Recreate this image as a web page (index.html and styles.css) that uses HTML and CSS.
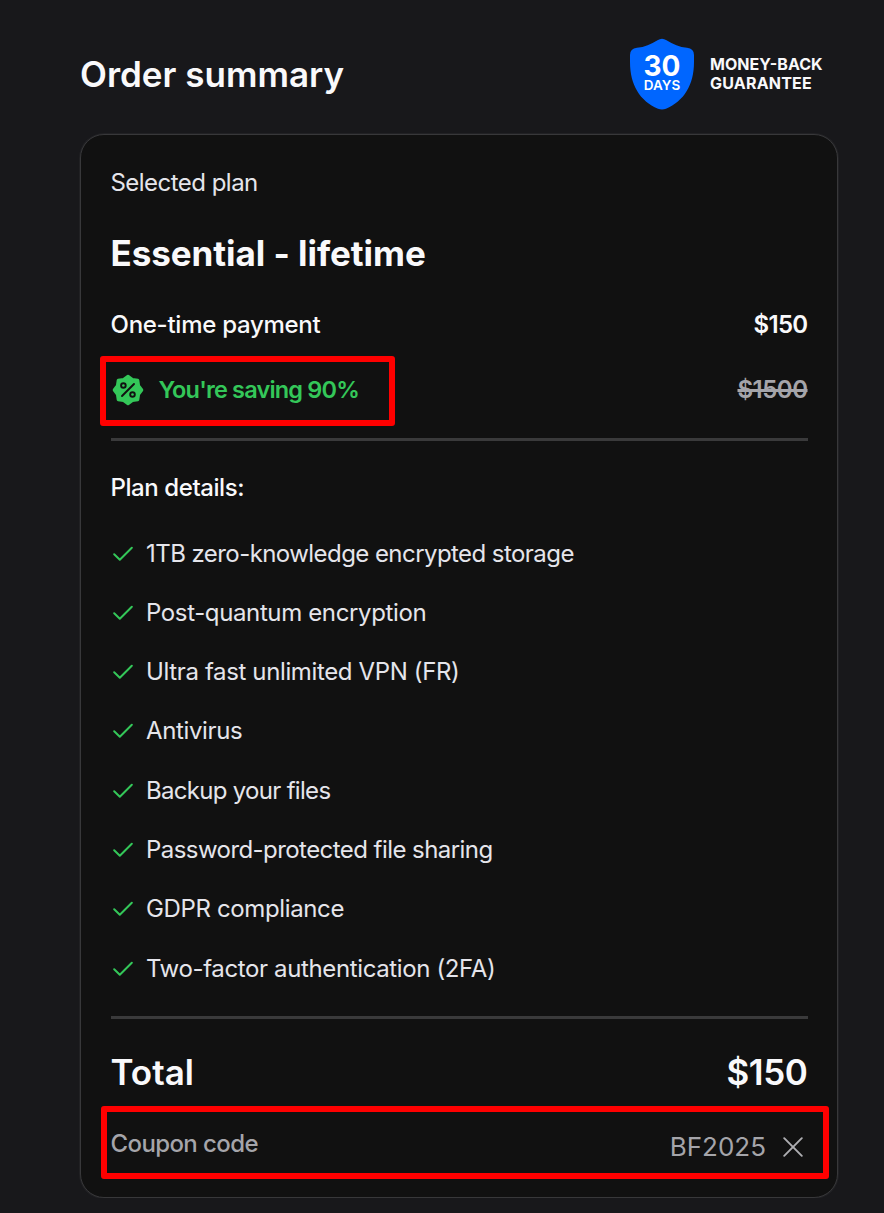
FILE: index.html
```html
<!DOCTYPE html>
<html lang="en">
<head>
  <meta charset="UTF-8" />
  <meta name="viewport" content="width=device-width, initial-scale=1.0"/>
  <title>Order summary</title>
  <link rel="stylesheet" href="styles.css">
</head>
<body>
  <svg class="sprite" aria-hidden="true">
    <symbol id="check" viewBox="0 0 20 16">
      <path d="M1.2 8.2 L6.8 13.7 L18.8 1.8" fill="none" stroke="#34c759" stroke-width="2" stroke-linecap="round" stroke-linejoin="round"/>
    </symbol>
  </svg>

  <main class="summary">
    <header class="header">
      <h1>Order summary</h1>
      <div class="guarantee">
        <div class="shield">
          <svg width="66" height="74" viewBox="0 0 66 74">
            <path fill="#0066ff" d="M28.5 2.2 Q33 -0.8 37.5 2.2 C44 6.4 50.5 9 58 9.8 Q65 10.6 65 17 V24 C65 47 55 63 37 70.8 Q33 72.4 29 70.8 C11 63 1 47 1 24 V17 Q1 10.6 8 9.8 C15.5 9 22 6.4 28.5 2.2 Z"/>
          </svg>
          <div class="shield-text"><span class="shield-num">30</span><span class="shield-days">DAYS</span></div>
        </div>
        <div class="guarantee-text">MONEY-BACK<br><span class="second-line">GUARANTEE</span></div>
      </div>
    </header>

    <section class="card">
      <p class="selected">Selected plan</p>
      <h2>Essential - lifetime</h2>
      <div class="row payment">
        <span class="payment-label">One-time payment</span>
        <span class="price">$150</span>
      </div>
      <div class="row saving">
        <div class="saving-label">
          <svg width="32" height="32" viewBox="0 0 32 32">
            <path fill="#34c759" stroke="#34c759" stroke-width="3" stroke-linejoin="round" d="M16 2.2 L20.4 5.4 L25.8 6.2 L26.6 11.6 L29.8 16 L26.6 20.4 L25.8 25.8 L20.4 26.6 L16 29.8 L11.6 26.6 L6.2 25.8 L5.4 20.4 L2.2 16 L5.4 11.6 L6.2 6.2 L11.6 5.4 Z"/>
            <g fill="none" stroke="#111" stroke-width="1.9" stroke-linecap="round">
              <path d="M10 22 L22 10"/>
              <circle cx="11.4" cy="11.5" r="2.3"/>
              <circle cx="20.5" cy="20.5" r="2.3"/>
            </g>
          </svg>
          <span class="saving-text">You're saving 90%</span>
        </div>
        <span class="old-price">$1500</span>
        <div class="highlight highlight-saving"></div>
      </div>
      <hr>
      <p class="details">Plan details:</p>
      <ul class="features">
        <li class="tight"><svg class="check"><use href="#check"/></svg><span>1TB zero-knowledge encrypted storage</span></li>
        <li><svg class="check"><use href="#check"/></svg><span>Post-quantum encryption</span></li>
        <li><svg class="check"><use href="#check"/></svg><span>Ultra fast unlimited VPN (FR)</span></li>
        <li><svg class="check"><use href="#check"/></svg><span>Antivirus</span></li>
        <li class="tighter"><svg class="check"><use href="#check"/></svg><span>Backup your files</span></li>
        <li class="tight"><svg class="check"><use href="#check"/></svg><span>Password-protected file sharing</span></li>
        <li><svg class="check"><use href="#check"/></svg><span>GDPR compliance</span></li>
        <li><svg class="check"><use href="#check"/></svg><span>Two-factor authentication (2FA)</span></li>
      </ul>
      <hr>
      <div class="row total">
        <span class="total-label">Total</span>
        <span class="total-price">$150</span>
      </div>
      <div class="row coupon">
        <span class="coupon-label">Coupon code</span>
        <div class="code">
          <span>BF2025</span>
          <svg width="20" height="20" viewBox="0 0 20 20">
            <path d="M1.2 1.2 L18.8 18.8 M18.8 1.2 L1.2 18.8" stroke="#aeaeb2" stroke-width="1.9" stroke-linecap="round"/>
          </svg>
        </div>
        <div class="highlight highlight-coupon"></div>
      </div>
    </section>
  </main>
</body>
</html>
```

FILE: styles.css
```css
* { box-sizing: border-box; }
body {
  margin: 0;
  background: #18181b;
  color: #f9f9fb;
  font-family: Inter, "Liberation Sans", sans-serif;
  font-size: 24px;
  line-height: 36px;
}
h1, h2, p, ul { margin: 0; padding: 0; }
.sprite { display: block; width: 0; height: 0; }
.summary { width: 758px; margin-left: 80px; padding-top: 38px; }
.header {
  display: flex;
  justify-content: space-between;
  align-items: center;
  height: 73px;
  padding-right: 16px;
}
h1 { margin-top: -2px; font-size: 35px; font-weight: 600; white-space: nowrap; }
.guarantee { display: flex; align-items: center; gap: 15px; }
.shield { position: relative; width: 66px; height: 74px; }
.shield svg { display: block; }
.shield-text {
  position: absolute;
  inset: 15px 0 0;
  display: flex;
  flex-direction: column;
  align-items: center;
  color: #fff;
}
.shield-num { font-size: 28px; font-weight: 700; line-height: 26px; }
.shield-days { font-size: 13.5px; font-weight: 600; line-height: 13px; }
.guarantee-text { width: 112px; margin-top: -1px; font-size: 16px; font-weight: 700; line-height: 19px; white-space: nowrap; }
.second-line { letter-spacing: 0.2px; }
.card {
  height: 1064px;
  margin-top: 23px;
  padding: 30px 29.5px 0;
  background: #111;
  border: 1px solid #38383a;
  border-radius: 24px;
  box-shadow: 0 0 0 1px #212124;
}
.selected { color: #e5e5eb; letter-spacing: -0.53px; }
h2 { margin-top: 30px; font-size: 35px; font-weight: 700; line-height: 44px; letter-spacing: -0.05px; white-space: nowrap; }
.row { position: relative; display: flex; justify-content: space-between; align-items: center; height: 36px; }
.payment { margin-top: 32px; }
.payment-label { font-weight: 500; letter-spacing: -0.27px; }
.price { font-weight: 600; letter-spacing: -0.7px; }
.saving { margin-top: 29px; }
.saving-label { display: flex; align-items: center; gap: 14.5px; padding-left: 1.5px; color: #34c759; }
.saving-text { font-size: 23.5px; font-weight: 600; letter-spacing: -0.83px; }
.old-price { color: #a5a5aa; font-weight: 600; letter-spacing: -0.5px; text-decoration: line-through; text-decoration-thickness: 3px; }
hr { height: 3px; margin: 29.5px 0; border: 0; background: #3a3a3b; }
.details { font-weight: 500; letter-spacing: -0.42px; }
.features { display: grid; gap: 23.3px; margin-top: 29.5px; list-style: none; color: #e5e5eb; }
.features li { display: flex; align-items: center; gap: 13.5px; height: 36px; padding-left: 2px; letter-spacing: -0.37px; white-space: nowrap; }
.features .tight { letter-spacing: -0.56px; }
.features .tighter { letter-spacing: -0.7px; }
.check { width: 20px; height: 16px; }
.total { height: 44px; margin-top: 31px; font-size: 35px; font-weight: 600; }
.total-price { letter-spacing: -0.4px; }
.coupon { margin-top: 33px; color: #a5a5aa; }
.coupon-label { padding-bottom: 2px; font-weight: 500; letter-spacing: -0.6px; }
.code { display: flex; align-items: center; gap: 17px; padding: 4px 4.5px 0 0; font-size: 26px; }

/* red marker boxes over the rows */
.highlight { position: absolute; border: 6px solid #f00; border-radius: 3px; }
.highlight-saving { left: -11px; top: -16px; width: 295px; height: 70px; }
.highlight-coupon { left: -9.5px; right: -21.5px; top: -21px; height: 73px; }
```
